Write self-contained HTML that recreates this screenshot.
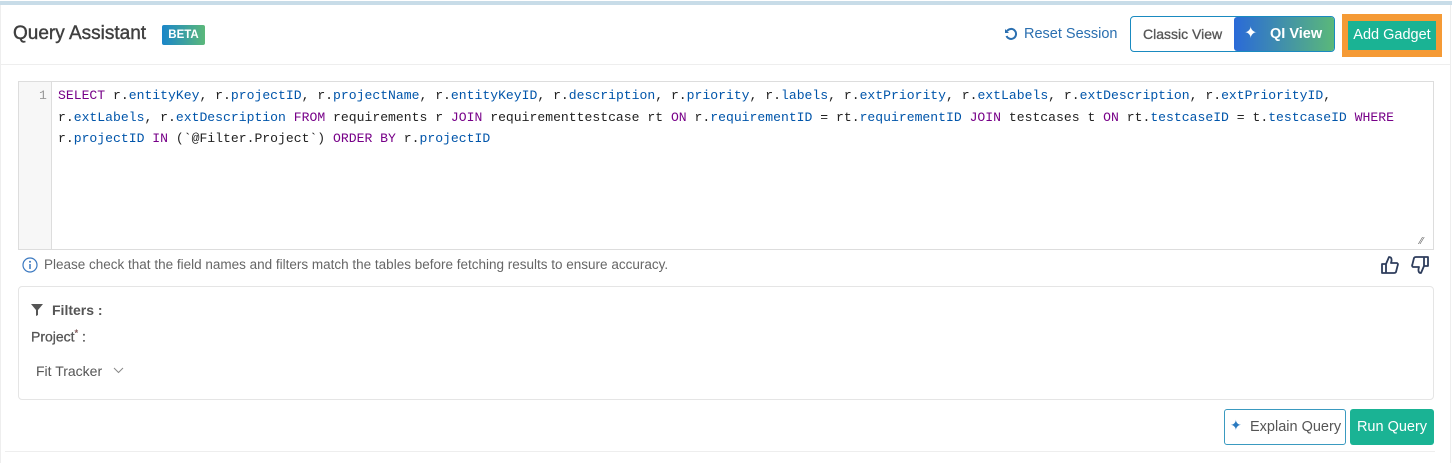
<!DOCTYPE html>
<html><head><meta charset="utf-8"><style>
*{box-sizing:border-box;margin:0;padding:0}
body{width:1452px;height:463px;background:#fff;font-family:"Liberation Sans",sans-serif;position:relative;overflow:hidden;color:#444}
.abs{position:absolute}
.code{font-family:"Liberation Mono",monospace;font-size:13.1px;white-space:pre;color:#222;line-height:21.5px}
.k{color:#708}.v{color:#05a}
</style></head><body>
<div class="abs" style="left:0;top:1px;width:1452px;height:4px;background:#c8dce8"></div>
<div class="abs" style="left:0;top:5px;width:1px;height:458px;background:#eee"></div>
<div class="abs" style="left:1450px;top:5px;width:1px;height:458px;background:#eee"></div>
<div class="abs" style="left:13px;top:23px;font-size:19px;color:#3f3f3f;-webkit-text-stroke:0.4px #3f3f3f">Query Assistant</div>
<div class="abs" style="left:162px;top:25px;width:43px;height:20px;border-radius:2px;background:linear-gradient(90deg,#1a86c9,#5bb87a);color:#fff;font-size:11.5px;font-weight:bold;text-align:center;line-height:20px">BETA</div>
<svg class="abs" style="left:1004px;top:27px" width="14" height="14" viewBox="0 0 14 14"><path d="M3 4 A5 5 0 1 1 2.5 9" fill="none" stroke="#2a6fb0" stroke-width="2"/><path d="M1 2 L1 6 L5 6Z" fill="#2a6fb0"/></svg>
<div class="abs" style="left:1024px;top:26px;font-size:14.5px;color:#2a6fb0">Reset Session</div>
<div class="abs" style="left:1130px;top:16px;width:205px;height:36px;border:1px solid #1a8ac0;border-radius:4px"></div>
<div class="abs" style="left:1143px;top:26px;font-size:14px;color:#555;-webkit-text-stroke:0.3px #555">Classic View</div>
<div class="abs" style="left:1234px;top:17px;width:100px;height:34px;border-radius:3px;background:linear-gradient(90deg,#2a6ad8,#5ab87a);color:#fff;font-weight:bold;font-size:14.5px;line-height:34px;padding-left:36px">QI View</div>
<div class="abs" style="left:1244px;top:23px;color:#fff;font-size:16px">✦</div>
<div class="abs" style="left:1342px;top:14px;width:100px;height:43px;background:#f59a35"></div>
<div class="abs" style="left:1348px;top:21px;width:88px;height:29px;background:#1ab394;color:#fff;font-size:14.5px;text-align:center;line-height:29px">Add Gadget</div>
<div class="abs" style="left:1px;top:64px;width:1450px;height:1px;background:#eee"></div>
<div class="abs" style="left:18px;top:81px;width:1416px;height:169px;border:1px solid #ddd;background:#fff"></div>
<div class="abs" style="left:19px;top:82px;width:33px;height:167px;background:#f7f7f7;border-right:1px solid #ddd"></div>
<div class="abs code" style="left:39px;top:85px;color:#999">1</div>
<div class="abs code" style="left:58px;top:85px"><span class="k">SELECT</span> r.<span class="v">entityKey</span>, r.<span class="v">projectID</span>, r.<span class="v">projectName</span>, r.<span class="v">entityKeyID</span>, r.<span class="v">description</span>, r.<span class="v">priority</span>, r.<span class="v">labels</span>, r.<span class="v">extPriority</span>, r.<span class="v">extLabels</span>, r.<span class="v">extDescription</span>, r.<span class="v">extPriorityID</span>,
r.<span class="v">extLabels</span>, r.<span class="v">extDescription</span> <span class="k">FROM</span> requirements r <span class="k">JOIN</span> requirementtestcase rt <span class="k">ON</span> r.<span class="v">requirementID</span> = rt.<span class="v">requirementID</span> <span class="k">JOIN</span> testcases t <span class="k">ON</span> rt.<span class="v">testcaseID</span> = t.<span class="v">testcaseID</span> <span class="k">WHERE</span>
r.<span class="v">projectID</span> <span class="k">IN</span> (`@Filter.Project`) <span class="k">ORDER BY</span> r.<span class="v">projectID</span></div>
<div class="abs" style="left:1420px;top:236px;color:#666;font-size:10px">⁄⁄</div>
<svg class="abs" style="left:22px;top:257px" width="16" height="16" viewBox="0 0 16 16"><circle cx="8" cy="8" r="7" fill="none" stroke="#3a78c0" stroke-width="1.2"/><circle cx="8" cy="4.8" r="1" fill="#3a78c0"/><path d="M8 7v5" stroke="#3a78c0" stroke-width="1.5"/></svg>
<div class="abs" style="left:44px;top:257px;font-size:13.5px;color:#666">Please check that the field names and filters match the tables before fetching results to ensure accuracy.</div>
<svg class="abs" style="left:1380px;top:255px" width="20" height="20" viewBox="0 0 20 20"><path d="M2 9h4v9H2z M6 9 L9 2 Q12 2 11.5 6 L11 8 H17 Q18.5 9 17.5 11 L16 17 Q15.5 18 14 18 H6" fill="none" stroke="#2e3d5c" stroke-width="1.8" stroke-linejoin="round"/></svg>
<svg class="abs" style="left:1410px;top:255px" width="20" height="20" viewBox="0 0 20 20"><path d="M18 11h-4V2h4z M14 11 L11 18 Q8 18 8.5 14 L9 12 H3 Q1.5 11 2.5 9 L4 3 Q4.5 2 6 2 H14" fill="none" stroke="#2e3d5c" stroke-width="1.8" stroke-linejoin="round"/></svg>
<div class="abs" style="left:18px;top:286px;width:1416px;height:114px;border:1px solid #e5e5e5;border-radius:4px"></div>
<svg class="abs" style="left:31px;top:304px" width="12" height="12" viewBox="0 0 12 12"><path d="M0 0h12L7 6v5L5 12V6z" fill="#555"/></svg>
<div class="abs" style="left:52px;top:302px;font-size:14px;font-weight:bold;color:#555">Filters :</div>
<div class="abs" style="left:31px;top:328px;font-size:14px;color:#555;-webkit-text-stroke:0.3px #555">Project<sup style="color:#e55;font-size:9px">*</sup> :</div>
<div class="abs" style="left:36px;top:363px;font-size:14px;color:#555">Fit Tracker</div>
<svg class="abs" style="left:113px;top:367px" width="11" height="8" viewBox="0 0 11 8"><path d="M1 1l4.5 4.5L10 1" fill="none" stroke="#888" stroke-width="1"/></svg>
<div class="abs" style="left:1224px;top:409px;width:122px;height:36px;border:1px solid #3a9ac0;border-radius:3px;font-size:14.5px;color:#555;line-height:34px;padding-left:25px">Explain Query</div>
<div class="abs" style="left:1230px;top:417px;color:#2a7ac0;font-size:14px">✦</div>
<div class="abs" style="left:1350px;top:409px;width:84px;height:36px;background:#1ab394;border-radius:3px;color:#fff;font-size:14.5px;text-align:center;line-height:36px">Run Query</div>
<div class="abs" style="left:5px;top:451px;width:1430px;height:1px;background:#eee"></div>
</body></html>
